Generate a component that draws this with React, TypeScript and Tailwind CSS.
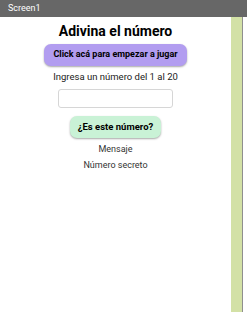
import React from "react";

export default function App() {
  return (
    <div className="w-[247px] h-[320px] bg-white flex flex-col overflow-hidden" style={{ fontFamily: 'Roboto, "Liberation Sans", Arial, sans-serif' }}>
      <div className="h-[17px] bg-[#676767] flex items-center pl-[8px] text-white text-[9px] shrink-0">Screen1</div>
      <div className="flex flex-1">
        <div className="w-[231px] flex flex-col items-center">
          <div className="mt-[4px] text-[14px] leading-[20px] font-bold text-black">Adivina el número</div>
          <button className="mt-[3px] w-[143px] h-[22px] rounded-[7px] bg-[#b29df0] text-[9px] font-bold text-black shadow-[0_1px_2px_rgba(0,0,0,0.35)] whitespace-nowrap">Click acá para empezar a jugar</button>
          <div className="mt-[5px] text-[9.5px] leading-[12px] text-[#222]">Ingresa un número del 1 al 20</div>
          <div className="mt-[6px] w-[115px] h-[19px] rounded-[3px] border border-[#d6d6d6] bg-white"></div>
          <button className="mt-[8px] w-[91px] h-[22px] rounded-[7px] bg-[#c9f2d6] text-[9.5px] font-bold text-black shadow-[0_1px_2px_rgba(0,0,0,0.35)] whitespace-nowrap">¿Es este número?</button>
          <div className="mt-[5px] text-[9px] leading-[12px] text-[#333]">Mensaje</div>
          <div className="mt-[4px] text-[9px] leading-[12px] text-[#333]">Número secreto</div>
        </div>
        <div className="w-[12px] h-[295px] bg-[#d3e1a6] border-r border-[#8f8f8f]"></div>
      </div>
    </div>
  );
}
